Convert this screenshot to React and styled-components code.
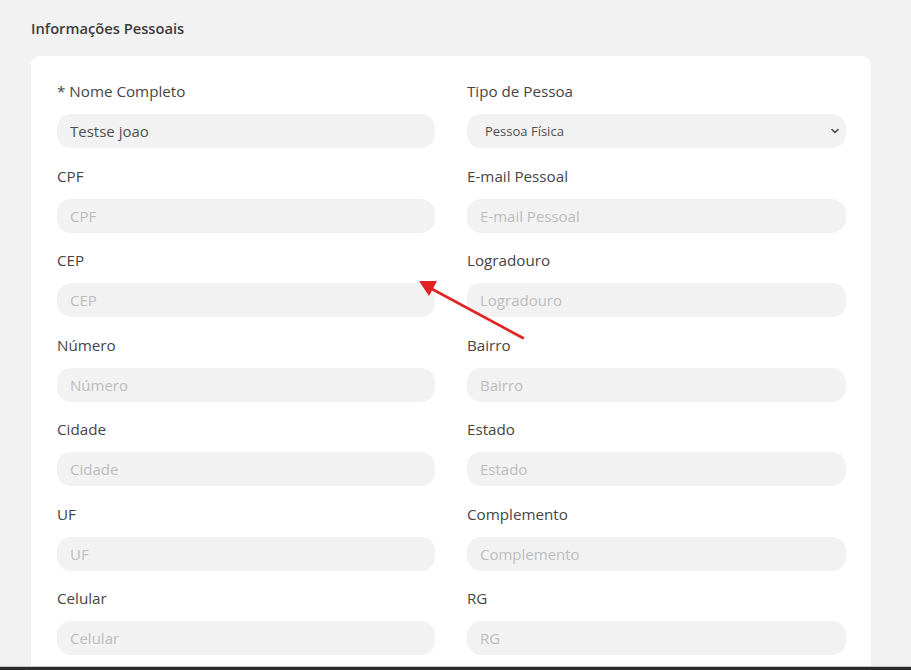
import React from "react";
import styled, { createGlobalStyle } from "styled-components";

const GlobalStyle = createGlobalStyle`
  html, body { margin: 0; padding: 0; }
  body {
    background: #f2f2f2;
    font-family: "Open Sans", "Noto Sans", sans-serif;
    overflow: hidden;
  }
  * { box-sizing: border-box; }
`;

const Screen = styled.div`
  position: relative;
  height: 670px;
  display: flex;
  flex-direction: column;
`;

const Viewport = styled.div`
  flex: 1;
  min-height: 0;
  overflow: hidden;
  display: flex;
  flex-direction: column;
  padding: 0 40px 0 31px;
`;

const SectionTitle = styled.h2`
  margin: 0;
  padding: 17px 0 17px;
  font-size: 14.7px;
  line-height: 22px;
  font-weight: 600;
  color: #3c3c3c;
`;

const Card = styled.section`
  flex: 1;
  background: #fff;
  border-radius: 9px 9px 0 0;
  padding: 25px 25px 0 26px;
`;

const Grid = styled.div`
  display: grid;
  grid-template-columns: 378px 379px;
  column-gap: 32px;
  row-gap: 17.5px;
`;

const Field = styled.label`
  display: flex;
  flex-direction: column;
  gap: 13px;
`;

const Label = styled.span`
  font-size: 15.2px;
  line-height: 20px;
  color: #454545;
`;

const Input = styled.input`
  height: 34px;
  border: none;
  outline: none;
  border-radius: 14px;
  background: #f2f2f2;
  padding: 0 13px;
  font-family: inherit;
  font-size: 15px;
  color: #505050;
  &::placeholder { color: #bdbdbd; }
`;

const SelectBox = styled.div`
  position: relative;
  height: 34px;
  border-radius: 14px;
  background: #f2f2f2;
  display: flex;
  align-items: center;
  padding: 0 18px;
  font-size: 13px;
  color: #505050;
`;

const Chevron = styled.svg`
  position: absolute;
  right: 5px;
  top: 50%;
  transform: translateY(-50%);
`;

const BottomEdge = styled.div`
  height: 4px;
  flex-shrink: 0;
  background: #2b2b2b;
  border-top: 1px solid #c8c8c8;
`;

const Annotation = styled.svg`
  position: absolute;
  left: 0;
  top: 0;
  pointer-events: none;
`;

const fields = [
  ["* Nome Completo", "Testse joao", "Tipo de Pessoa", "select"],
  ["CPF", null, "E-mail Pessoal", null],
  ["CEP", null, "Logradouro", null],
  ["Número", null, "Bairro", null],
  ["Cidade", null, "Estado", null],
  ["UF", null, "Complemento", null],
  ["Celular", null, "RG", null],
];

function FieldCell({ label, value }) {
  if (value === "select") {
    return (
      <Field as="div">
        <Label>{label}</Label>
        <SelectBox>
          Pessoa Física
          <Chevron width="12" height="12" viewBox="0 0 12 12">
            <path d="M3 4.5 L6 7.5 L9 4.5" fill="none" stroke="#4a4a4a" strokeWidth="1.6" strokeLinecap="round" strokeLinejoin="round" />
          </Chevron>
        </SelectBox>
      </Field>
    );
  }
  return (
    <Field>
      <Label>{label}</Label>
      {value ? (
        <Input defaultValue={value} />
      ) : (
        <Input placeholder={label.replace("* ", "")} />
      )}
    </Field>
  );
}

export default function App() {
  return (
    <>
      <GlobalStyle />
      <Screen>
        <Viewport>
          <SectionTitle>Informações Pessoais</SectionTitle>
          <Card>
            <Grid>
              {fields.map(([l1, v1, l2, v2]) => (
                <React.Fragment key={l1}>
                  <FieldCell label={l1} value={v1} />
                  <FieldCell label={l2} value={v2} />
                </React.Fragment>
              ))}
            </Grid>
          </Card>
        </Viewport>
        <BottomEdge />
        <Annotation width="911" height="670" viewBox="0 0 911 670">
          <line x1="523" y1="338" x2="432" y2="289" stroke="#e02424" strokeWidth="2.6" strokeLinecap="round" />
          <polygon points="419,281 437,281 429,296" fill="#e02424" />
        </Annotation>
      </Screen>
    </>
  );
}
